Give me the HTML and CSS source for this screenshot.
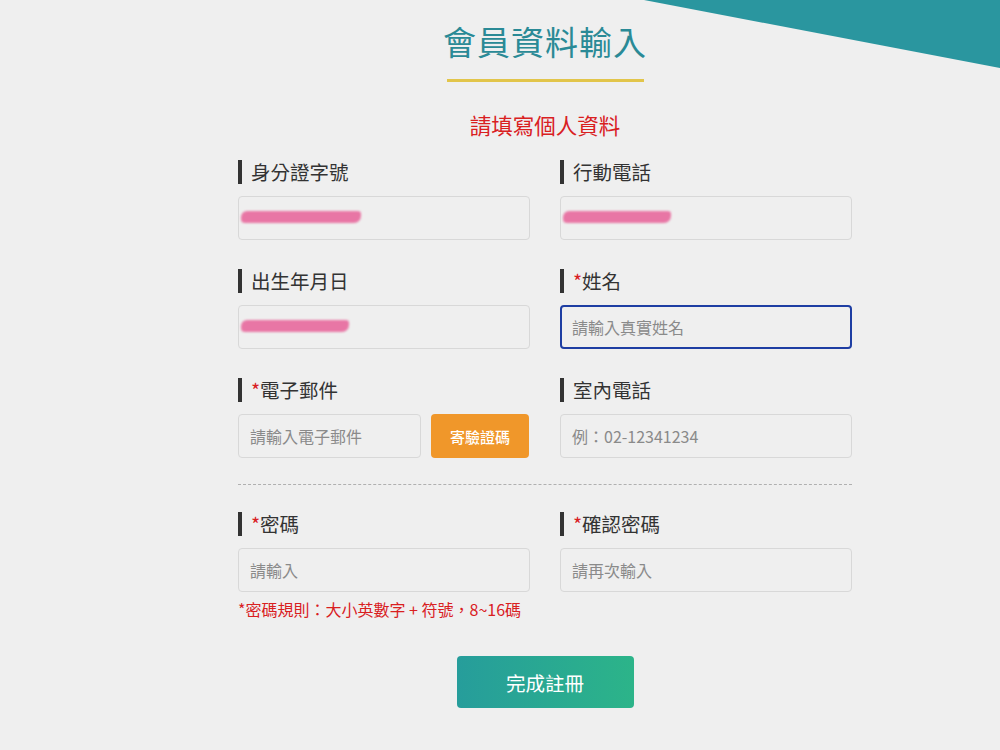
FILE: index.html
```html
<!DOCTYPE html>
<html lang="zh-Hant">
<head>
    <meta charset="UTF-8">
    <meta name="viewport" content="width=device-width, initial-scale=1.0">
    <title>會員資料輸入</title>
    <link rel="stylesheet" href="styles.css">
</head>
<body>
    <div class="corner"></div>
    <div class="wrap">
        <h1>會員資料輸入</h1>
        <div class="line"></div>
        <p class="sub">請填寫個人資料</p>

        <div class="grid">
            <div class="field">
                <label>身分證字號</label>
                <div class="box"><span class="mark"></span></div>
            </div>
            <div class="field">
                <label>行動電話</label>
                <div class="box"><span class="mark short"></span></div>
            </div>

            <div class="field">
                <label>出生年月日</label>
                <div class="box"><span class="mark short"></span></div>
            </div>
            <div class="field">
                <label><span class="star">*</span>姓名</label>
                <input type="text" class="focus" placeholder="請輸入真實姓名">
            </div>

            <div class="field">
                <label><span class="star">*</span>電子郵件</label>
                <div class="mail">
                    <input type="text" placeholder="請輸入電子郵件">
                    <button class="send">寄驗證碼</button>
                </div>
            </div>
            <div class="field">
                <label>室內電話</label>
                <input type="text" placeholder="例：02-12341234">
            </div>
        </div>

        <hr class="dash">

        <div class="grid">
            <div class="field">
                <label><span class="star">*</span>密碼</label>
                <input type="password" placeholder="請輸入">
                <p class="rule">*密碼規則：大小英數字 + 符號，8~16碼</p>
            </div>
            <div class="field">
                <label><span class="star">*</span>確認密碼</label>
                <input type="password" placeholder="請再次輸入">
            </div>
        </div>

        <div class="bottom">
            <button class="done">完成註冊</button>
        </div>
    </div>
</body>
</html>
```

FILE: styles.css
```css
*{
    margin: 0;
    padding: 0;
    box-sizing: border-box;
}
body {
    font-family: "Noto Sans CJK TC", "Noto Sans", sans-serif;
    background: #efefef;
    width: 1000px;
    height: 750px;
    overflow: hidden;
    position: relative;
}
.corner{
    position: absolute;
    top: 0;
    right: 0;
    width: 356px;
    height: 68px;
    background: #2a969f;
    clip-path: polygon(0 0, 100% 0, 100% 100%);
}
.wrap{
    width: 614px;
    margin-left: 238px;
    padding-top: 20px;
}
h1{
    text-align: center;
    font-size: 33px;
    line-height: 42px;
    font-weight: 400;
    color: #2a8a96;
    letter-spacing: 1px;
}
.line{
    width: 197px;
    height: 3px;
    background: #e2c54a;
    margin: 17px auto 0;
}
.sub{
    text-align: center;
    color: #d9201f;
    font-size: 21.5px;
    line-height: 28px;
    margin-top: 29px;
}
.grid{
    display: grid;
    grid-template-columns: 1fr 1fr;
    column-gap: 30px;
    row-gap: 29px;
    margin-top: 21px;
}
.field label{
    display: block;
    border-left: 4px solid #333;
    padding-left: 9px;
    font-size: 19.5px;
    line-height: 24px;
    color: #333;
    margin-bottom: 12px;
}
.star{
    color: #d9201f;
}
input, .box{
    display: block;
    width: 100%;
    height: 44px;
    border: 1px solid #d8d8d8;
    border-radius: 4px;
    background: #efefef;
    padding: 0 11px;
    font-family: inherit;
    font-size: 16px;
    color: #333;
    outline: none;
}
input::placeholder{
    color: #8a8a8a;
}
.box{
    position: relative;
}
.mark{
    position: absolute;
    left: 2px;
    top: 14px;
    width: 120px;
    height: 12px;
    border-radius: 6px 3px 7px 4px;
    background: #e86a9e;
    filter: blur(1px);
    opacity: 0.9;
}
.mark.short{
    width: 108px;
}
input.focus{
    border: 2px solid #1e3ea3;
    padding: 0 10px;
}
.mail{
    display: flex;
    gap: 10px;
}
.mail input{
    width: 183px;
}
.send{
    width: 98px;
    height: 44px;
    border: none;
    border-radius: 4px;
    background: #f0972a;
    color: #fff;
    font-family: inherit;
    font-size: 15px;
    font-weight: 500;
}
.dash{
    border: none;
    border-top: 1px dashed #b0b0b0;
    margin-top: 26px;
}
.dash + .grid{
    margin-top: 27px;
}
.rule{
    color: #d9201f;
    font-size: 16px;
    line-height: 20px;
    margin-top: 7px;
}
.bottom{
    display: flex;
    justify-content: center;
    margin-top: 37px;
}
.done{
    width: 177px;
    height: 52px;
    border: none;
    border-radius: 4px;
    background: linear-gradient(90deg, #269d9b, #2cb489);
    color: #fff;
    font-family: inherit;
    font-size: 19.5px;
}
```
